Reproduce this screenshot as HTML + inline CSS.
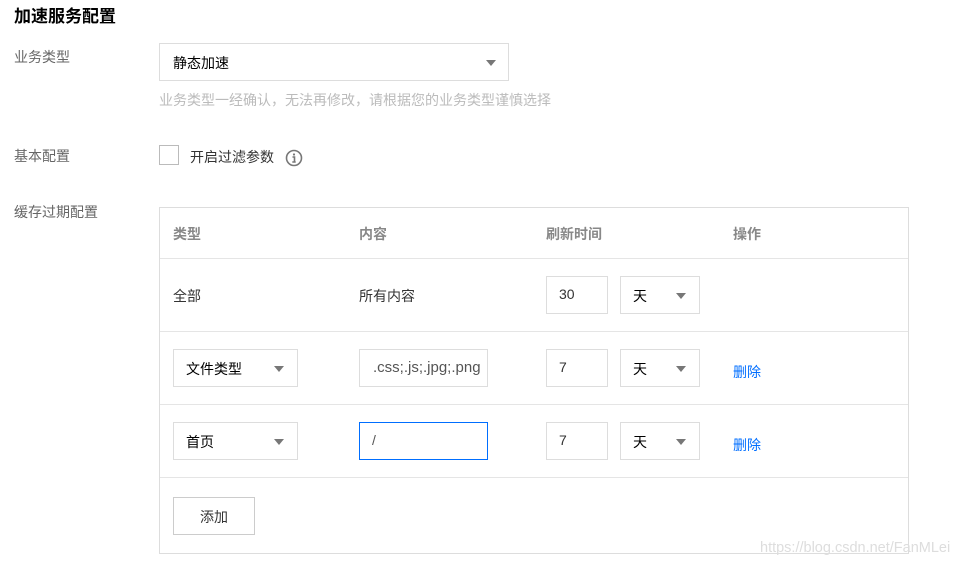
<!DOCTYPE html>
<html><head><meta charset="utf-8"><style>
*{box-sizing:border-box;margin:0;padding:0}
body{width:978px;height:568px;background:#fff;position:relative;overflow:hidden;font-family:"Liberation Sans","Noto Sans CJK SC",sans-serif;font-size:14px;color:#000}
.a{position:absolute;white-space:nowrap}
.lbl{color:#666;font-size:14px}
.box{position:absolute;border:1px solid #ddd;background:#fff}
.tri{position:absolute;width:0;height:0;border-left:5px solid transparent;border-right:5px solid transparent;border-top:6px solid #777}
.hl{position:absolute;left:160px;width:748px;height:1px;background:#e5e5e5}
.th{color:#888;font-weight:bold}
</style></head><body>
<div class="a" style="left:14px;top:2px;font-size:17px;font-weight:bold;color:#000">加速服务配置</div>
<div class="a lbl" style="left:14px;top:47px">业务类型</div>
<div class="box" style="left:159px;top:43px;width:350px;height:38px"></div>
<div class="a" style="left:173px;top:53px">静态加速</div>
<div class="tri" style="left:486px;top:60px"></div>
<div class="a" style="left:159px;top:90px;color:#bbb">业务类型一经确认，无法再修改，请根据您的业务类型谨慎选择</div>
<div class="a lbl" style="left:14px;top:146px">基本配置</div>
<div class="box" style="left:159px;top:145px;width:20px;height:20px;border-color:#bbb"></div>
<div class="a" style="left:190px;top:147px;color:#333">开启过滤参数</div>
<svg class="a" style="left:285px;top:149px" width="18" height="18" viewBox="0 0 18 18"><circle cx="9" cy="9" r="7.5" fill="none" stroke="#777" stroke-width="1.6"/><circle cx="9" cy="5.5" r="1.1" fill="#777"/><path d="M7.5 8h2v5M7.3 13h3.4" stroke="#777" stroke-width="1.6" fill="none"/></svg>
<div class="a lbl" style="left:14px;top:202px">缓存过期配置</div>
<div class="box" style="left:159px;top:207px;width:750px;height:347px"></div>
<div class="a th" style="left:173px;top:224px">类型</div>
<div class="a th" style="left:359px;top:224px">内容</div>
<div class="a th" style="left:546px;top:224px">刷新时间</div>
<div class="a th" style="left:733px;top:224px">操作</div>
<div class="hl" style="top:258px"></div>
<div class="hl" style="top:331px"></div>
<div class="hl" style="top:404px"></div>
<div class="hl" style="top:477px"></div>
<div class="a" style="left:173px;top:286px;color:#333">全部</div>
<div class="a" style="left:359px;top:286px;color:#333">所有内容</div>
<div class="box" style="left:546px;top:276px;width:62px;height:38px"></div><div class="a" style="left:559px;top:286px;color:#333">30</div>
<div class="box" style="left:620px;top:276px;width:80px;height:38px"></div><div class="a" style="left:633px;top:286px">天</div><div class="tri" style="left:676px;top:293px"></div>
<div class="box" style="left:173px;top:349px;width:125px;height:38px"></div><div class="a" style="left:186px;top:359px">文件类型</div><div class="tri" style="left:274px;top:366px"></div>
<div class="box" style="left:359px;top:349px;width:129px;height:38px;overflow:hidden"><span style="position:absolute;left:13px;top:9px;color:#555;white-space:nowrap;font-size:15px">.css;.js;.jpg;.png</span></div>
<div class="box" style="left:546px;top:349px;width:62px;height:38px"></div><div class="a" style="left:559px;top:359px;color:#333">7</div>
<div class="box" style="left:620px;top:349px;width:80px;height:38px"></div><div class="a" style="left:633px;top:359px">天</div><div class="tri" style="left:676px;top:366px"></div>
<div class="a" style="left:733px;top:362px;color:#006eff">删除</div>
<div class="box" style="left:173px;top:422px;width:125px;height:38px"></div><div class="a" style="left:186px;top:432px">首页</div><div class="tri" style="left:274px;top:439px"></div>
<div class="box" style="left:359px;top:422px;width:129px;height:38px;border-color:#006eff"></div><div class="a" style="left:372px;top:432px;color:#555">/</div>
<div class="box" style="left:546px;top:422px;width:62px;height:38px"></div><div class="a" style="left:559px;top:432px;color:#333">7</div>
<div class="box" style="left:620px;top:422px;width:80px;height:38px"></div><div class="a" style="left:633px;top:432px">天</div><div class="tri" style="left:676px;top:439px"></div>
<div class="a" style="left:733px;top:435px;color:#006eff">删除</div>
<div class="box" style="left:173px;top:497px;width:82px;height:38px;border-color:#ccc"></div><div class="a" style="left:200px;top:507px;color:#333">添加</div>
<div class="a" style="left:760px;top:540px;color:#ddd;font-size:14.5px">https://blog.csdn.net/FanMLei</div>
</body></html>
